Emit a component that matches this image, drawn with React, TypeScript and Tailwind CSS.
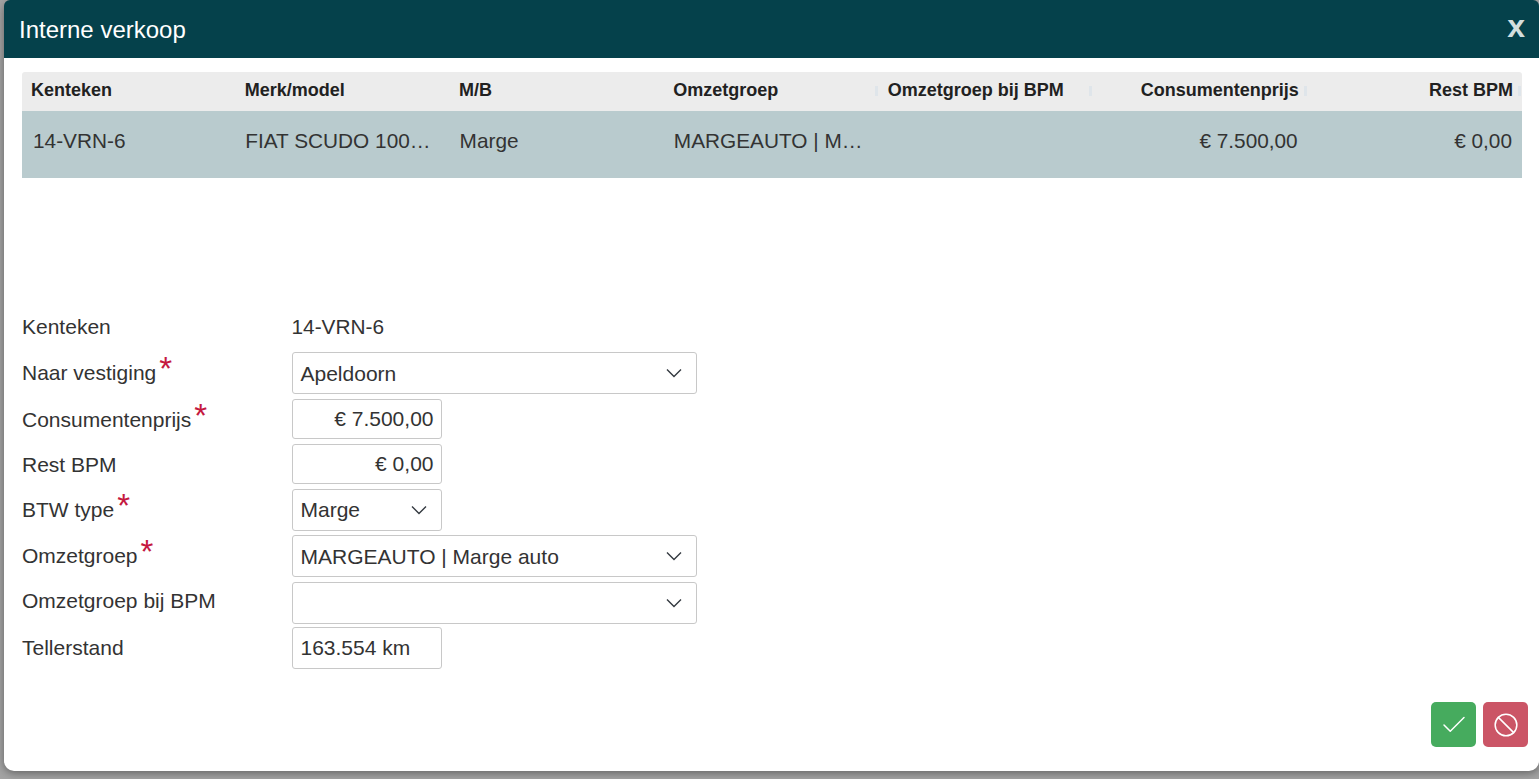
import { Ban, Check } from "lucide-react";

function Chevron() {
  return (
    <svg width="16" height="10" viewBox="0 0 16 10" fill="none" stroke="#343a40" strokeWidth="1.4" className="shrink-0">
      <path d="M1 1.5 8 8.5 15 1.5" />
    </svg>
  );
}

function Star() {
  return <span className="relative top-[-8px] ml-[3px] h-[26px] text-[33px] leading-none text-[#c5193f]">*</span>;
}

function Select({ value, narrow }: { value: string; narrow?: boolean }) {
  return (
    <div className={`flex h-[42px] items-center justify-between rounded-[3px] border border-[#c8c8c8] bg-white pl-[7.5px] pr-[14px] ${narrow ? "w-[150px]" : "w-[405px]"}`}>
      <span className={narrow ? "" : "relative top-[1px]"}>{value}</span>
      <Chevron />
    </div>
  );
}

function Input({ value, right, tall }: { value: string; right?: boolean; tall?: boolean }) {
  return (
    <div className={`flex w-[150px] items-center rounded-[3px] border border-[#c8c8c8] bg-white px-[7.5px] ${tall ? "h-[42px]" : "h-[40px]"} ${right ? "justify-end" : ""}`}>
      {value}
    </div>
  );
}

function Row({ label, req, className, labelClass = "", children }: { label: string; req?: boolean; className: string; labelClass?: string; children: React.ReactNode }) {
  return (
    <div className={`flex items-center ${className}`}>
      <div className={`flex h-[26px] w-[270px] items-center ${labelClass}`}>
        <span>{label}</span>
        {req && <Star />}
      </div>
      {children}
    </div>
  );
}

const heads: [string, boolean][] = [
  ["Kenteken", false],
  ["Merk/model", false],
  ["M/B", false],
  ["Omzetgroep", false],
  ["Omzetgroep bij BPM", false],
  ["Consumentenprijs", true],
  ["Rest BPM", true],
];

const cells: [string, boolean][] = [
  ["14-VRN-6", false],
  ["FIAT SCUDO 100 MULTIJET", false],
  ["Marge", false],
  ["MARGEAUTO | Marge auto", false],
  ["", false],
  ["€ 7.500,00", true],
  ["€ 0,00", true],
];

export default function App() {
  return (
    <div className="h-[779px] overflow-hidden bg-[#a3a3a3] pb-2 pl-1 font-['Liberation_Sans',Arial,sans-serif] text-[21px] text-[#333333]">
      <div className="flex h-full flex-col rounded-[10px] bg-white shadow-[0_2px_8px_rgba(0,0,0,0.4)]">
        <header className="flex h-[58px] shrink-0 items-center justify-between rounded-t-[6px] bg-[#05414b] pl-[15px] pr-[14px]">
          <h1 className="relative top-[1px] text-[24px] text-white">Interne verkoop</h1>
          <span className="relative top-[-3px] text-[32px] font-bold leading-none text-[#d3dede]">x</span>
        </header>

        <div className="mx-[18px] mt-[14px] w-[1500px] overflow-hidden rounded-t-[3px]">
          <div className="grid h-[39px] grid-cols-7 items-center bg-[#ececec] pb-[2px] text-[18px] font-bold text-[#212121]">
            {heads.map(([h, right], i) => (
              <div key={h} className={`relative pr-[9px] ${i === 0 ? "pl-[9px]" : "pl-[8.5px]"} ${right ? "text-right" : ""}`}>
                {h}
                {i >= 3 && <span className="absolute right-[1px] top-1/2 h-[10px] w-[3px] -translate-y-1/2 bg-[#dfe5ea]" />}
              </div>
            ))}
          </div>
          <div className="grid h-[67px] grid-cols-7 items-center bg-[#b9cbce] pb-[8px] text-[20.8px]">
            {cells.map(([c, right], i) => (
              <div key={i} className={`truncate ${i === 0 ? "pl-[11px]" : "pl-[9px]"} ${i === 1 ? "pr-[18px]" : i === 3 ? "pr-[13px]" : "pr-[10px]"} ${right ? "text-right" : ""}`}>
                {c}
              </div>
            ))}
          </div>
        </div>

        <div className="mx-[18px] mt-[137px] flex flex-col">
          <Row label="Kenteken" className="h-[24px]">
            <span className="relative left-[-0.5px] text-[20.8px]">14-VRN-6</span>
          </Row>
          <Row label="Naar vestiging" req className="mt-[13px]">
            <Select value="Apeldoorn" />
          </Row>
          <Row label="Consumentenprijs" req className="mt-[5px]" labelClass="relative top-[1px]">
            <Input value="€ 7.500,00" right />
          </Row>
          <Row label="Rest BPM" className="mt-[5px]" labelClass="relative top-[1px]">
            <Input value="€ 0,00" right />
          </Row>
          <Row label="BTW type" req className="mt-[5px]">
            <Select value="Marge" narrow />
          </Row>
          <Row label="Omzetgroep" req className="mt-[4px]">
            <Select value="MARGEAUTO | Marge auto" />
          </Row>
          <Row label="Omzetgroep bij BPM" className="mt-[5px]" labelClass="relative top-[-2px]">
            <Select value="" />
          </Row>
          <Row label="Tellerstand" className="mt-[3px]">
            <Input value="163.554 km" tall />
          </Row>
        </div>

        <div className="mb-6 mr-[11px] mt-auto flex justify-end gap-[7px]">
          <button className="flex h-[45px] w-[45px] items-center justify-center rounded-[5px] bg-[#46ab5e] text-white">
            <Check size={30} strokeWidth={1.2} />
          </button>
          <button className="flex h-[45px] w-[45px] items-center justify-center rounded-[5px] bg-[#cb5566] text-white">
            <Ban size={26} strokeWidth={1.4} />
          </button>
        </div>
      </div>
    </div>
  );
}
